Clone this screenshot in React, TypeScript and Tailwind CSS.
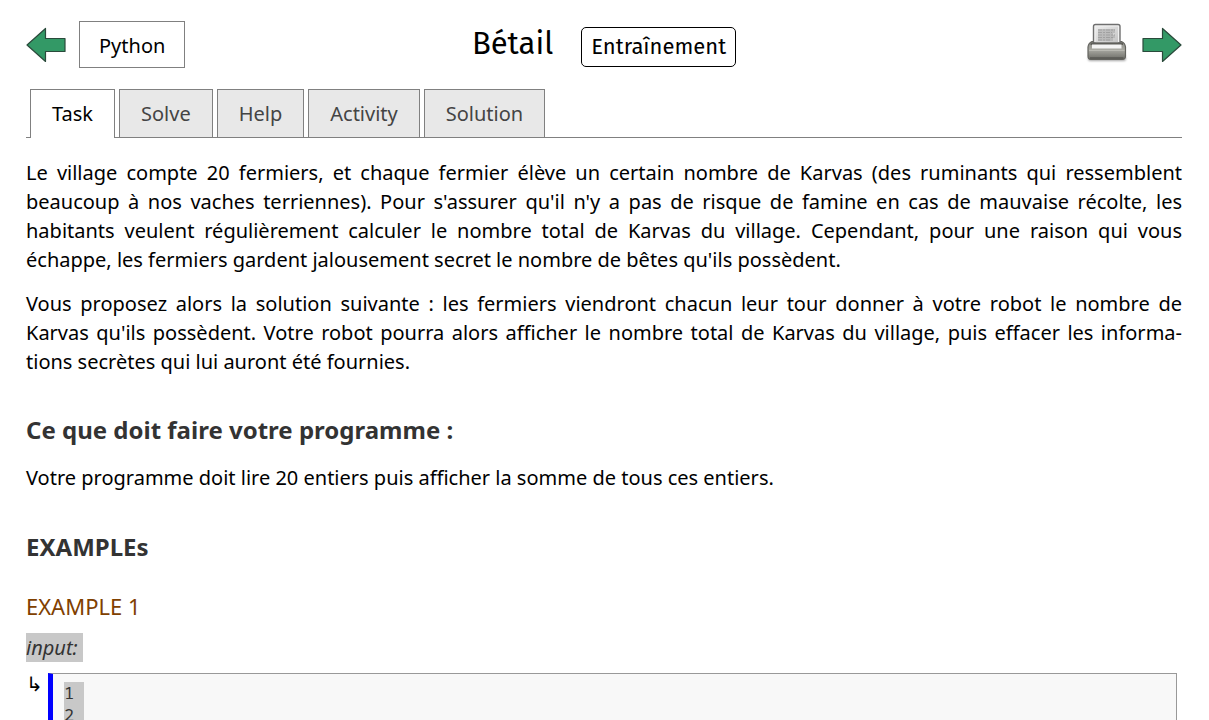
import React from "react";

const tabs = ["Task", "Solve", "Help", "Activity", "Solution"];

function Arrow({ flipped = false }: { flipped?: boolean }) {
  return (
    <svg width="40" height="36" viewBox="0 0 40 36" className={flipped ? "block -scale-x-100" : "block"} aria-hidden="true">
      <path d="M1 18 19.5 1.5V11.5H39V24.5H19.5V34.5Z" fill="#339966" stroke="#2a4a3b" strokeWidth="1.2" strokeLinejoin="round" />
    </svg>
  );
}

function Printer() {
  return (
    <svg width="42" height="40" viewBox="0 0 42 40" className="block" aria-hidden="true">
      <defs>
        <linearGradient id="body" x1="0" y1="0" x2="0" y2="1">
          <stop offset="0" stopColor="#8c8c86" />
          <stop offset="0.45" stopColor="#a9a9a2" />
          <stop offset="1" stopColor="#6c6c66" />
        </linearGradient>
        <linearGradient id="paper" x1="0" y1="0" x2="1" y2="1">
          <stop offset="0" stopColor="#ececec" />
          <stop offset="1" stopColor="#c4c4c4" />
        </linearGradient>
        <filter id="soft" x="-20%" y="-50%" width="140%" height="200%">
          <feGaussianBlur stdDeviation="1" />
        </filter>
        <filter id="print" x="-10%" y="-10%" width="120%" height="120%">
          <feGaussianBlur stdDeviation="0.7" />
        </filter>
      </defs>
      <rect x="2" y="33" width="38" height="5" rx="2" fill="#000" opacity="0.35" filter="url(#soft)" />
      <path d="M6 18.500Q2.500 20 2 24V33Q2 36.500 5 36.500H36Q39.500 36.500 39.500 33V24Q39 20 35.500 18.500Z" fill="url(#body)" stroke="#63635e" strokeWidth="1.200" />
      <path d="M7.500 20V3.500Q7.500 1.500 9.500 1.500H32Q34 1.500 34 3.500V20Z" fill="#f0f0f0" stroke="#6f6f6f" strokeWidth="1.400" />
      <rect x="9.500" y="3.500" width="22.500" height="16" fill="url(#paper)" />
      <g filter="url(#print)" opacity="0.75">
        <path d="M12 6H29V10H27V12H29V15H27V18H12Z" fill="#b2b2b2" />
        <path d="M12 7H29M12 9.500H26M12 12H29M12 14.500H27M12 17H25" stroke="#8e8e8e" strokeWidth="1.100" strokeDasharray="4 1 2 1" />
      </g>
      <path d="M4.500 19.500H37V22H4.500Z" fill="#5f5f5a" />
      <path d="M6 21.500H35.500V25.500H6Z" fill="#f4f4f4" />
      <path d="M3 27.500H38.500" stroke="#b9b9b2" />
      <path d="M4 35H37.500" stroke="#484844" />
    </svg>
  );
}

export default function App() {
  return (
    <div lang="fr" className="h-screen overflow-hidden bg-white pr-[27px] pl-[26px] pt-[21px] font-['Noto_Sans',sans-serif] text-[20px] leading-[29px] text-black">
      <header className="grid grid-cols-[1fr_auto_1fr] items-center">
        <div className="flex items-center gap-[13px]">
          <a href="#previous" aria-label="Previous"><Arrow /></a>
          <button type="button" className="h-[47px] border border-[#808080] px-[19px] pt-px">Python</button>
        </div>
        <div className="flex items-start gap-7 font-['Fira_Sans','Noto_Sans',sans-serif]">
          <h1 className="text-[31px] leading-[42px]">Bétail</h1>
          <span className="mt-1 rounded-[5px] border border-black px-[9px] py-px text-[22px] leading-[36px]">Entraînement</span>
        </div>
        <div className="flex items-center justify-end gap-[14px]">
          <button type="button" aria-label="Print" className="pb-1"><Printer /></button>
          <a href="#next" aria-label="Next"><Arrow flipped /></a>
        </div>
      </header>

      <nav className="mt-[21px] flex gap-1 border-b border-[#808080] pl-1">
        {tabs.map((tab, i) => (
          <a
            key={tab}
            href={"#" + tab.toLowerCase()}
            className={
              i === 0
                ? "-mb-px h-[49px] border border-b-0 border-[#808080] bg-white px-[21px] pt-[9px]"
                : "h-[48px] border border-b-0 border-[#808080] bg-[#e8e8e8] px-[21px] pt-[9px] text-[#444]"
            }
          >
            {tab}
          </a>
        ))}
      </nav>

      <main>
        <p className="mt-5 text-justify">
          Le village compte 20 fermiers, et chaque fermier élève un certain nombre de Karvas (des ruminants qui ressemblent beaucoup à nos vaches terriennes). Pour s'assurer qu'il n'y a pas de risque de famine en cas de mauvaise récolte, les habitants veulent régulièrement calculer le nombre total de Karvas du village. Cependant, pour une raison qui vous échappe, les fermiers gardent jalousement secret le nombre de bêtes qu'ils possèdent.
        </p>
        <p className="mt-[15px] text-justify">
          <span className="block [text-align-last:justify]">
            Vous proposez alors la solution suivante : les fermiers viendront chacun leur tour donner à votre robot le nombre de Karvas qu'ils possèdent. Votre robot pourra alors afficher le nombre total de Karvas du village, puis effacer les informa-
          </span>
          tions secrètes qui lui auront été fournies.
        </p>
        <h2 className="mt-[37px] text-[24px] font-bold leading-[34px] text-[#333]">Ce que doit faire votre programme :</h2>
        <p className="mt-4">Votre programme doit lire 20 entiers puis afficher la somme de tous ces entiers.</p>
        <h2 className="mt-[38px] text-[24px] font-bold leading-[34px] text-[#333]">EXAMPLEs</h2>
        <h3 className="mt-[27px] text-[22px] leading-[31px] text-[#804000]">EXAMPLE 1</h3>
        <div className="mt-[11px] flex">
          <em className="whitespace-pre bg-[#c8c8c8] text-[#333]">input: </em>
        </div>
        <div className="mt-[11px] flex pr-[5px]">
          <span className="w-[22px] shrink-0 font-['DejaVu_Sans',sans-serif] text-[20px] leading-[22px]">↳</span>
          <pre className="grow border border-l-[5px] border-[#999] border-l-[#0000ff] bg-[#f8f8f8] px-[11px] py-2 text-[17px] leading-[22px] text-[#333]">
            <code className="inline-block bg-[#c8c8c8] font-['Noto_Sans_Mono','DejaVu_Sans_Mono',monospace]">{"1 \n2 "}</code>
          </pre>
        </div>
      </main>
    </div>
  );
}
